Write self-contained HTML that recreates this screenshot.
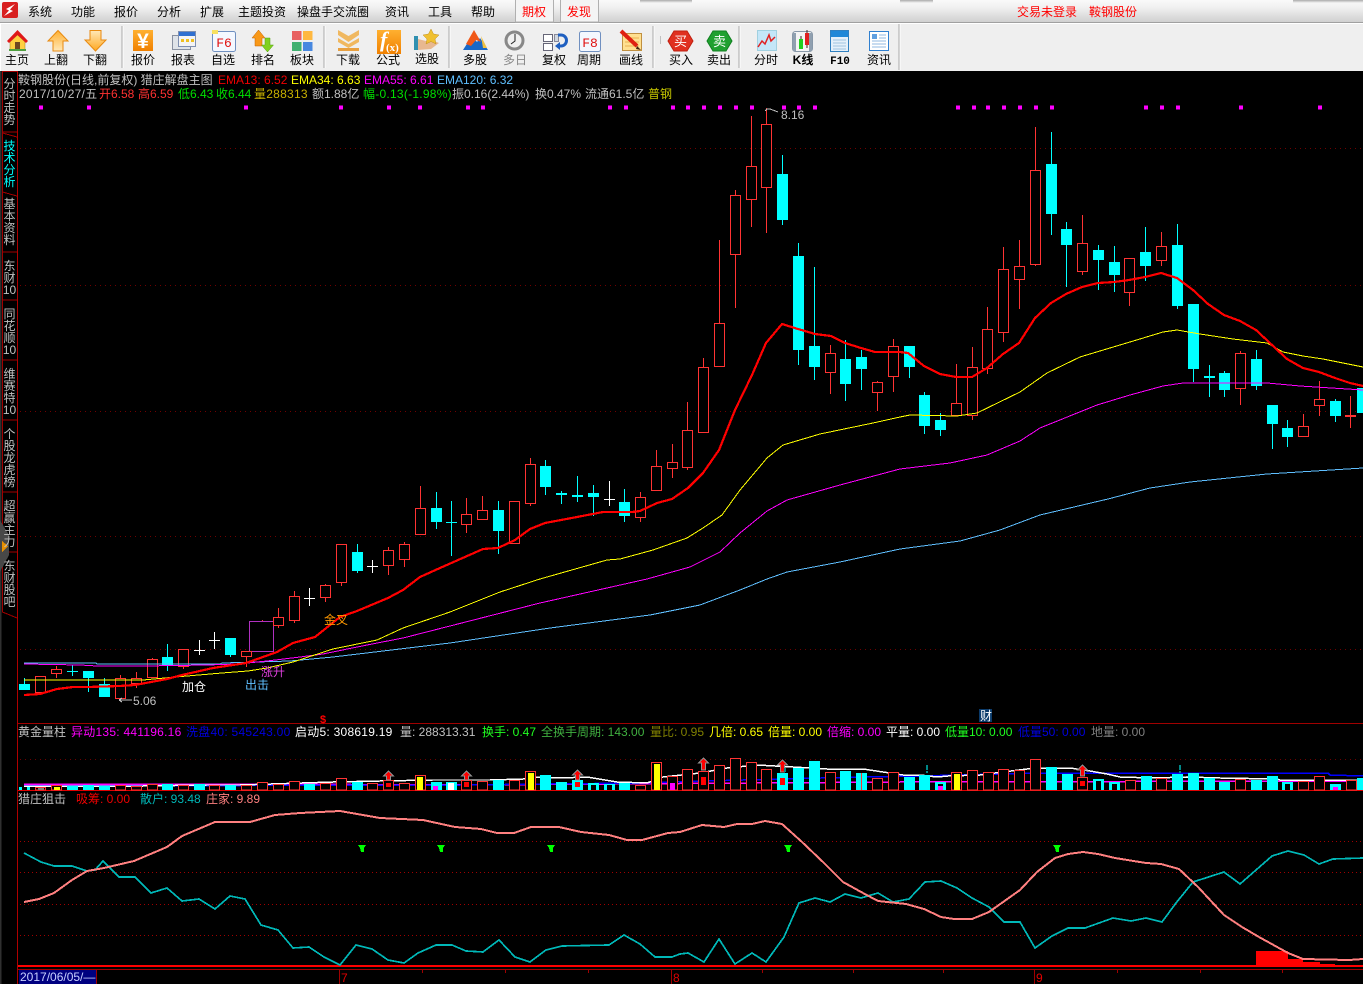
<!DOCTYPE html>
<html><head><meta charset="utf-8"><title>鞍钢股份</title>
<style>
html,body{margin:0;padding:0;background:#000;width:1363px;height:984px;overflow:hidden}
svg{position:absolute;left:0;top:0}
text{font-family:"Liberation Sans","WenQuanYi Zen Hei","Noto Sans CJK SC",sans-serif;font-size:12px;white-space:pre}
.t{position:absolute;left:2px;width:15px;text-align:center;font:12px/12px "Liberation Sans","WenQuanYi Zen Hei","Noto Sans CJK SC",sans-serif;color:#c0c0c0}
.m text{fill:#000}
.l text{fill:#000;text-anchor:middle}
.g{fill:#c0c0c0}
.w{letter-spacing:.25px}
</style></head><body>
<svg width="1363" height="984" viewBox="0 0 1363 984">
<defs>
<linearGradient id="mb" x1="0" y1="0" x2="0" y2="1"><stop offset="0" stop-color="#fafafa"/><stop offset=".35" stop-color="#f0f0f0"/><stop offset="1" stop-color="#d0d0d0"/></linearGradient>
<linearGradient id="or" x1="0" y1="0" x2="0" y2="1"><stop offset="0" stop-color="#ffb030"/><stop offset="1" stop-color="#ffe8b8"/></linearGradient>
<linearGradient id="or2" x1="0" y1="0" x2="0" y2="1"><stop offset="0" stop-color="#ffe8b8"/><stop offset="1" stop-color="#ffa820"/></linearGradient>
<linearGradient id="or3" x1="0" y1="0" x2="0" y2="1"><stop offset="0" stop-color="#ffb030"/><stop offset="1" stop-color="#f08000"/></linearGradient>
<linearGradient id="sh" x1="0" y1="0" x2="0" y2="1"><stop offset="0" stop-color="#aaa"/><stop offset="1" stop-color="#aaa" stop-opacity="0"/></linearGradient>
</defs>
<!-- menu bar -->
<rect width="1363" height="22" fill="url(#mb)"/>
<rect x="640" width="52" height="3" fill="url(#sh)"/><rect x="900" width="33" height="3" fill="url(#sh)"/><rect x="1293" width="70" height="3" fill="url(#sh)"/>
<rect y="22" width="1363" height="1" fill="#a0a0a0"/>
<rect y="23" width="1363" height="1" fill="#fff"/>
<rect x="1" y="24" width="1362" height="47" fill="#efefef"/>
<rect y="23" width="1" height="48" fill="#fff"/>
<rect x="515.5" y="-1" width="38" height="23" fill="#f4f4f4" stroke="#b0b0b0"/>
<rect x="560.5" y="-1" width="38" height="23" fill="#f4f4f4" stroke="#b0b0b0"/>
<rect x="2" y="2" width="16" height="16" rx="2" fill="#d82020"/>
<path d="M15 4L6 9l3 1.500L4 16l9-5-3-1.500z" fill="#fff"/>
<g class="m">
<text x="28" y="16">系统</text><text x="71" y="16">功能</text><text x="114" y="16">报价</text><text x="157" y="16">分析</text><text x="200" y="16">扩展</text><text x="238" y="16">主题投资</text><text x="297" y="16">操盘手交流圈</text><text x="385" y="16">资讯</text><text x="428" y="16">工具</text><text x="471" y="16">帮助</text>
</g>
<text x="522" y="16" fill="#f00">期权</text><text x="567" y="16" fill="#f00">发现</text>
<text x="1017" y="16" fill="#f00">交易未登录</text><text x="1089" y="16" fill="#f00">鞍钢股份</text>
<!-- toolbar separators -->
<path d="M122 26v42M324 26v42M449 26v42M653 26v42M739 26v42M899 24v46" stroke="#a8a8a8" fill="none"/>
<path d="M123 26v42M325 26v42M450 26v42M654 26v42M740 26v42M900 24v46" stroke="#fff" fill="none"/>
<path d="M660.500 36v8" stroke="#c0c0c0"/>
<!-- icons -->
<path d="M10 42l7.500-7 7.500 7v8H10z" fill="#ffd040" stroke="#a08020" stroke-width=".5"/><rect x="15" y="42" width="5" height="8" fill="#704820"/><path d="M17.500 30L7 41l2 2 8.500-8 8.500 8 2-2z" fill="#e01818"/><rect x="9" y="49" width="17" height="2" fill="#50a040"/>
<path d="M58 30.500L68 41H63V51H53V41H48Z" fill="url(#or)" stroke="#e88a10"/>
<path d="M90 30.500H101V40H106L95.500 51 85 40H90Z" fill="url(#or2)" stroke="#e88a10"/>
<rect x="133" y="30" width="20" height="21" fill="url(#or3)"/><text x="143" y="48" text-anchor="middle" fill="#fff" style="font-size:21px;font-weight:bold">¥</text>
<rect x="172.500" y="35.500" width="18" height="14" fill="#dfe3e8" stroke="#8890a0"/><rect x="178.500" y="31.500" width="17" height="15" fill="#f4f4f4" stroke="#8090b0"/><rect x="179" y="32" width="16" height="4" fill="#3070d0"/><path d="M181 39h3v3h-3zM186 39h3v3h-3zM191 39h3v3h-3z" fill="#f0c020"/>
<rect x="212.500" y="31.500" width="23" height="20" rx="2" fill="#f4f8ff" stroke="#7090c0"/><path d="M212 30h6v4h-6z" fill="#f8e060"/><text x="224" y="47" text-anchor="middle" fill="#e01010" style="font-family:'Liberation Mono',monospace;font-size:13px">F6</text>
<path d="M258.500 30l6.500 8h-3v8h-7v-8h-3z" fill="#f89818" stroke="#c06000" stroke-width=".5"/><path d="M265 38h5v7h3.500l-6 7-6-7h3.500z" fill="#80d020" stroke="#50a010" stroke-width=".5"/>
<rect x="292" y="31" width="9.500" height="9" fill="#e86060"/><rect x="303" y="31" width="9.500" height="9" fill="#ffb840"/><rect x="292" y="42" width="9.500" height="9" fill="#40b070"/><rect x="303" y="42" width="9.500" height="9" fill="#4888e0"/>
<path d="M338 30l10.500 6 10.500-6v5l-10.500 7-10.500-7zM338 38l10.500 6 10.500-6v4l-10.500 6-10.500-6z" fill="#f0b860"/><rect x="338" y="48" width="21" height="3" fill="#e8a040"/>
<rect x="377" y="30" width="24" height="24" fill="url(#or3)"/><text x="380" y="47" fill="#fff" style="font-family:'Liberation Serif',serif;font-style:italic;font-size:22px;font-weight:bold">f</text><text x="386" y="51" fill="#fff" style="font-family:'Liberation Serif',serif;font-size:11px;font-weight:bold">(x)</text>
<rect x="414" y="36" width="4" height="14" fill="#3090b0"/><path d="M418 39l8 2h8l5 2-8 6-13 1z" fill="#e8b890"/><path d="M431 29l2.500 5 5.500 1-4 4 1 5-5-2.500-5 2.500 1-5-4-4 5.500-1z" fill="#f0c030" stroke="#c09020" stroke-width=".5"/>
<path d="M463 50L472 36L477 42L480 38L488 50Z" fill="#1868c8"/><path d="M466 44L474 30L481 42L476 40L471 46Z" fill="#f05818"/><path d="M481 36l6 12h-4z" fill="#f0c040"/>
<circle cx="514.500" cy="40.500" r="8.500" fill="#f0f0f0" stroke="#888" stroke-width="3"/><path d="M515 34v7l-4 3" stroke="#222" fill="none"/>
<rect x="543.500" y="34.500" width="9" height="7" fill="#fff" stroke="#667"/><rect x="543.500" y="43.500" width="9" height="7" fill="#fff" stroke="#667"/><rect x="554.500" y="34.500" width="4" height="7" fill="#d0d8e0" stroke="#889"/><path d="M558 35h3a5 5 0 0 1 0 11h-2" stroke="#2060c0" stroke-width="3" fill="none"/><path d="M560 42v8l-5-4z" fill="#2060c0"/>
<rect x="579.500" y="31.500" width="21" height="20" rx="2" fill="#f4f8ff" stroke="#7090c0"/><text x="590" y="47" text-anchor="middle" fill="#e01010" style="font-family:'Liberation Mono',monospace;font-size:13px">F8</text>
<rect x="622.500" y="33.500" width="19" height="17" fill="#ffe090" stroke="#c09040"/><path d="M625 38h14M625 42h14M625 46h14" stroke="#e8b050"/><path d="M621 31l16 15" stroke="#e02010" stroke-width="4"/><path d="M637 46l4 4-5-1z" fill="#402010"/>
<path d="M674 31h13l6 10-6 10h-13l-6-10z" fill="#e03020" stroke="#c02010"/><text x="680.500" y="46" text-anchor="middle" fill="#fff" style="font-size:13px">买</text>
<path d="M713 31h13l6 10-6 10h-13l-6-10z" fill="#20a030" stroke="#108020"/><text x="719.500" y="46" text-anchor="middle" fill="#fff" style="font-size:13px">卖</text>
<rect x="757.500" y="30.500" width="19" height="20" fill="#c4e6f8" stroke="#a0d0e0"/><path d="M758 47l4-6 3 3 4-9 2 6 4-4" stroke="#e02020" fill="none" stroke-width="1.500"/>
<rect x="792.500" y="31.500" width="20" height="20" rx="3" fill="#f4f4f4" stroke="#8898a8"/><path d="M793 33h3v18h-3zM809 33h3v18h-3z" fill="#90a0b0"/><rect x="799" y="39" width="4" height="10" fill="#20d020"/><rect x="805" y="33" width="4" height="12" fill="#e02020"/><path d="M801 36v3M807 30v3M807 45v3" stroke="#402020"/>
<rect x="830.500" y="30.500" width="18" height="21" fill="#e4f0fa" stroke="#3080c0"/><rect x="831" y="31" width="17" height="6" fill="#2088d8"/><path d="M833 40h13M833 43h13M833 46h13M833 49h13" stroke="#a0c4e0"/>
<rect x="869.500" y="31.500" width="19" height="19" fill="#fff" stroke="#3080d0"/><rect x="872" y="34" width="5" height="5" fill="#60a0e0"/><path d="M879 35h7M879 38h7M872 41h14M872 44h14M872 47h14" stroke="#90b8e0"/>
<!-- toolbar labels -->
<g class="l">
<text x="17" y="64">主页</text><text x="56" y="64">上翻</text><text x="95" y="64">下翻</text><text x="143" y="64">报价</text><text x="183" y="64">报表</text><text x="223" y="64">自选</text><text x="263" y="64">排名</text><text x="302" y="64">板块</text><text x="348" y="64">下载</text><text x="388" y="64">公式</text><text x="427" y="63">选股</text><text x="475" y="64">多股</text><text x="554" y="64">复权</text><text x="589" y="64">周期</text><text x="631" y="64">画线</text><text x="681" y="64">买入</text><text x="719" y="64">卖出</text><text x="766" y="64">分时</text><text x="879" y="64">资讯</text>
<text x="515" y="64" style="fill:#888">多日</text>
<text x="803" y="64" style="font-weight:bold">K线</text>
<text x="840" y="64" style="font-family:'Liberation Mono',monospace;font-size:11px;font-weight:bold">F10</text>
</g>
<!-- black body -->
<rect y="71" width="1363" height="913" fill="#000"/>
<rect y="71" width="1.500" height="913" fill="#303030"/>
<g shape-rendering="crispEdges">
<!-- sidebar lines -->
<path d="M2.500 71.500H17M2.500 71V612L17 618M2.500 132L17 132M2.500 133L17 137M2.500 192L17 196M2.500 252H17M2.500 300H17M2.500 360H17M2.500 420H17M2.500 492H17M2.500 552H17" stroke="#a00000" fill="none"/>
<path d="M17.500 71V984" stroke="#b00000"/>
<!-- grid -->
<path d="M20 148.500H1363M20 285.500H1363M20 411.500H1363M20 536.500H1363M20 649.500H1363" stroke="#700000" stroke-dasharray="1 4" fill="none"/>
<path d="M20 759.500H1363" stroke="#700000" stroke-dasharray="1 4"/>
<path d="M20 841.500H1363M20 872.500H1363M20 904.500H1363M20 935.500H1363" stroke="#a00000" stroke-dasharray="1 3" fill="none"/>
<!-- panel dividers -->
<path d="M18 723.500H1363" stroke="#a00000"/>
<path d="M18 790.500H1363" stroke="#e00000"/>
<path d="M18 966H1363" stroke="#f00" stroke-width="2"/>
<path d="M18 969.500H1363" stroke="#a00000"/>
<!-- markers -->
<path d="M41 107.500h.1M89 107.500h.1M246 107.500h.1M341 107.500h.1M389 107.500h.1M420 107.500h.1M468 107.500h.1M483 107.500h.1M610 107.500h.1M626 107.500h.1M673 107.500h.1M688 107.500h.1M704 107.500h.1M720 107.500h.1M736 107.500h.1M752 107.500h.1M784 107.500h.1M799 107.500h.1M815 107.500h.1M958 107.500h.1M974 107.500h.1M988 107.500h.1M1004 107.500h.1M1020 107.500h.1M1036 107.500h.1M1052 107.500h.1M1146 107.500h.1M1162 107.500h.1M1178 107.500h.1M1241 107.500h.1M1320 107.500h.1" stroke="#f0f" stroke-width="4" stroke-linecap="square" fill="none"/>
<!-- magenta box -->
<rect x="249.500" y="621.500" width="24" height="30" fill="#000" stroke="#b030c0"/>
<path d="M262.500 620v1" stroke="#f33"/>
<!-- cyan wicks -->
<path d="M24.500 678V684M72.500 665V676M88.500 678V692M104.500 678V684M167.500 644V657M167.500 665V671M230.500 655V657M357.500 544V552M357.500 571V573M436.500 492V508M436.500 522V529M451.500 501V556M498.500 501V510M498.500 531V554M545.500 460V466M545.500 487V495M561.500 491V504M577.500 476V502M593.500 485V516M624.500 489V502M624.500 516V522M782.500 155V174M782.500 220V225M798.500 243V256M798.500 350V365M814.500 267V346M814.500 367V380M845.500 340V359M845.500 384V401M861.500 350V357M861.500 369V390M909.500 367V378M924.500 392V395M924.500 426V434M940.500 413V420M940.500 430V436M1051.500 132V164M1051.500 214V235M1066.500 222V229M1066.500 245V287M1098.500 245V250M1098.500 260V290M1114.500 246V262M1114.500 275V292M1145.500 227V252M1145.500 266V281M1177.500 224V245M1177.500 306V309M1193.500 369V382M1209.500 365V397M1224.500 371V373M1224.500 390V397M1256.500 350V359M1256.500 386V390M1272.500 424V449M1287.500 420V428M1287.500 437V447M1335.500 399V401M1335.500 416V422" stroke="#0ff" fill="none"/>
<!-- cyan bodies -->
<path d="M19 684h11V690h-11zM67 671h11v1h-11zM83 671h11V678h-11zM99 684h11V697h-11zM162 657h11V665h-11zM225 638h11V655h-11zM352 552h11V571h-11zM431 508h11V522h-11zM446 522h11v1h-11zM493 510h11V531h-11zM540 466h11V487h-11zM556 493h11V495h-11zM572 495h11V497h-11zM588 493h11V497h-11zM619 502h11V516h-11zM777 174h11V220h-11zM793 256h11V350h-11zM809 346h11V367h-11zM840 359h11V384h-11zM856 357h11V369h-11zM904 346h11V367h-11zM919 395h11V426h-11zM935 420h11V430h-11zM1046 164h11V214h-11zM1061 229h11V245h-11zM1093 250h11V260h-11zM1109 262h11V275h-11zM1140 252h11V266h-11zM1172 245h11V306h-11zM1188 304h11V369h-11zM1204 376h11V378h-11zM1219 373h11V390h-11zM1251 359h11V386h-11zM1267 405h11V424h-11zM1282 428h11V437h-11zM1330 401h11V416h-11zM1357 388h6V413h-6z" fill="#0ff"/>
<!-- white crosses -->
<path d="M199.500 640V655M194 650.500h11M214.500 632V649M209 640.500h11M309.500 588V606M304 598.500h11M372.500 560V573M367 566.500h11M609.500 481V506M604 499.500h11" stroke="#fff" fill="none"/>
<!-- red candles -->
<path d="M35.500 676.500h10V692.500h-10zM56.500 666V669M56.500 673V678M51.500 669.500h10V673.500h-10zM120.500 675V678M115.500 678.500h10V698.500h-10zM136.500 672V678M136.500 683V688M131.500 678.500h10V683.500h-10zM152.500 658V659M147.500 659.500h10V677.500h-10zM183.500 666V669M178.500 649.500h10V666.500h-10zM246.500 656V667M241.500 651.500h10V656.500h-10zM278.500 608V617M278.500 625V628M273.500 617.500h10V625.500h-10zM294.500 591V596M294.500 620V623M289.500 596.500h10V620.500h-10zM325.500 584V585M325.500 597V602M320.500 585.500h10V597.500h-10zM341.500 582V586M336.500 544.500h10V582.500h-10zM388.500 547V550M388.500 565V575M383.500 550.500h10V565.500h-10zM404.500 542V544M404.500 559V567M399.500 544.500h10V559.500h-10zM420.500 486V508M420.500 534V535M415.500 508.500h10V534.500h-10zM466.500 498V514M466.500 524V533M461.500 514.500h10V524.500h-10zM482.500 496V510M482.500 519V520M477.500 510.500h10V519.500h-10zM509.500 501.500h10V543.500h-10zM530.500 458V464M530.500 503V506M525.500 464.500h10V503.500h-10zM640.500 492V497M640.500 517V522M635.500 497.500h10V517.500h-10zM656.500 450V466M656.500 490V491M651.500 466.500h10V490.500h-10zM672.500 444V462M672.500 468V478M667.500 462.500h10V468.500h-10zM687.500 402V430M687.500 467V470M682.500 430.500h10V467.500h-10zM703.500 358V367M698.500 367.500h10V432.500h-10zM719.500 240V323M714.500 323.500h10V366.500h-10zM735.500 190V195M735.500 254V308M730.500 195.500h10V254.500h-10zM751.500 116V166M751.500 199V227M746.500 166.500h10V199.500h-10zM766.500 108V124M766.500 187V233M761.500 124.500h10V187.500h-10zM830.500 345V353M830.500 372V394M825.500 353.500h10V372.500h-10zM877.500 381V382M877.500 392V411M872.500 382.500h10V392.500h-10zM893.500 339V346M893.500 376V392M888.500 346.500h10V376.500h-10zM956.500 364V403M951.500 403.500h10V415.500h-10zM972.500 347V367M972.500 415V420M967.500 367.500h10V415.500h-10zM987.500 307V329M987.500 368V374M982.500 329.500h10V368.500h-10zM1003.500 247V269M1003.500 332V342M998.500 269.500h10V332.500h-10zM1019.500 240V266M1019.500 279V309M1014.500 266.500h10V279.500h-10zM1035.500 127V170M1035.500 264V266M1030.500 170.500h10V264.500h-10zM1082.500 215V243M1082.500 271V275M1077.500 243.500h10V271.500h-10zM1129.500 292V306M1124.500 258.500h10V292.500h-10zM1161.500 232V246M1161.500 260V266M1156.500 246.500h10V260.500h-10zM1240.500 351V353M1240.500 388V405M1235.500 353.500h10V388.500h-10zM1303.500 414V426M1298.500 426.500h10V436.500h-10zM1319.500 381V399M1319.500 405V416M1314.500 399.500h10V405.500h-10zM1350.500 396V428" stroke="#ff3333" fill="#000"/>
<rect x="1345" y="415" width="11" height="2" fill="#ff3333"/>
<!-- EMA lines -->
<polyline fill="none" stroke="#5fbfff" stroke-width="1" points="24,663 96,663 97,664 220,664 222,663 290,661 333,657 450,643 550,628 650,615 700,605 740,590 767,579 787,572 840,562 900,549 960,541 1000,530 1040,515 1108,499 1150,488 1190,482 1267,474 1363,468"/>
<polyline fill="none" stroke="#f0f" stroke-width="1" points="24,664 80,665 97,666 143,666 207,665 238,664 267,661 300,657 323,654 367,645 403,638 450,626 540,603 647,579 690,567 720,552 740,533 767,511 787,500 840,485 900,469 950,463 987,455 1020,441 1040,428 1097,405 1130,395 1163,386 1183,383 1233,383 1267,383 1300,386 1363,390"/>
<polyline fill="none" stroke="#ff0" stroke-width="1" points="24,680 48,680 96,680 143,680 187,676 222,673 248,671 267,668 293,662 333,649 377,640 403,628 450,612 500,592 540,579 607,560 620,559 653,550 687,538 703,528 722,515 740,490 767,458 783,445 820,434 873,423 900,417 910,415 957,416 977,413 1020,392 1047,373 1080,357 1130,342 1163,332 1177,330 1200,334 1233,339 1267,343 1283,352 1303,356 1323,359 1363,367"/>
<polyline fill="none" stroke="#f00" stroke-width="2.200" points="24,695 40,694 57,689 73,687 88,687 119,686 135,685 167,679 182,675 213,668 246,663 277,652 293,643 315,637 340,617 357,611 388,598 403,590 420,577 440,568 483,549 498,548 515,540 530,529 545,523 577,517 603,512 632,512 640,511 657,503 672,499 688,488 703,473 719,450 735,410 752,375 766,343 782,324 798,329 815,334 831,336 845,343 861,348 875,352 900,352 908,353 924,366 940,374 956,377 972,377 987,368 1003,354 1019,343 1035,318 1051,303 1066,294 1082,287 1098,283 1114,282 1129,280 1145,277 1161,273 1177,278 1193,290 1208,304 1224,315 1240,321 1256,330 1272,345 1287,359 1303,368 1319,372 1335,378 1350,383 1363,386"/>
<!-- high/low arrows -->
<path d="M767 109l-2 2M767 109h3l8 3M119 700h13M119 700l3-2M119 700l3 2" stroke="#c0c0c0" fill="none"/>
<!-- volume lines -->
<polyline fill="none" stroke="#f0f" stroke-width="1.500" points="24,784 240,784 460,785 900,782 1363,781"/>
<polyline fill="none" stroke="#00f" stroke-width="1.500" points="24,786 460,785 640,783 743,780 860,777 920,776 1040,773 1328,773 1330,775 1363,776"/>
<polyline fill="none" stroke="#fff" stroke-width="1.500" points="24,786 143,786 207,785 240,785 333,782 380,781 433,780 490,780 523,779 537,777 560,778 587,777 617,782 647,783 663,777 700,773 727,768 757,765 775,766 793,767 827,769 863,769 903,775 920,775 937,777 948,776 980,775 995,773 1027,769 1042,768 1070,768 1090,771 1107,774 1120,777 1153,778 1187,777 1220,778 1277,779 1280,780 1363,780"/>
<!-- volume cyan -->
<path d="M19 787h3V790h-3zM27 787h3V790h-3zM67 786h11V790h-11zM83 785h11V790h-11zM99 786h11V790h-11zM162 784h11V790h-11zM194 784h11V790h-11zM225 785h11V790h-11zM304 784h11V790h-11zM352 782h11V790h-11zM431 782h11V790h-11zM446 782h11V790h-11zM493 780h11V790h-11zM540 775h11V790h-11zM556 782h11V790h-11zM572 780h11V790h-11zM588 783h11V790h-11zM604 784h11V790h-11zM619 783h11V790h-11zM777 773h11V790h-11zM793 768h11V790h-11zM809 761h11V790h-11zM840 771h11V790h-11zM856 773h11V790h-11zM904 777h11V790h-11zM919 775h11V790h-11zM935 782h11V790h-11zM1046 767h11V790h-11zM1062 774h11V790h-11zM1093 779h11V790h-11zM1109 782h11V790h-11zM1141 776h11V790h-11zM1172 774h11V790h-11zM1188 773h11V790h-11zM1204 778h11V790h-11zM1219 782h11V790h-11zM1251 780h11V790h-11zM1267 776h11V790h-11zM1282 782h11V790h-11zM1330 784h11V790h-11zM1357 778h6V790h-6z" fill="#0ff"/>
<!-- volume red -->
<path d="M35.500 787.500h10V790h-10zM51.500 785.500h10V790h-10zM115.500 785.500h10V790h-10zM131.500 786.500h10V790h-10zM147.500 784.500h10V790h-10zM178.500 785.500h10V790h-10zM209.500 785.500h10V790h-10zM241.500 785.500h10V790h-10zM257.500 782.500h10V790h-10zM273.500 784.500h10V790h-10zM289.500 781.500h10V790h-10zM320.500 783.500h10V790h-10zM336.500 778.500h10V790h-10zM367.500 783.500h10V790h-10zM383.500 780.500h10V790h-10zM399.500 783.500h10V790h-10zM415.500 775.500h10V790h-10zM461.500 780.500h10V790h-10zM477.500 781.500h10V790h-10zM509.500 780.500h10V790h-10zM525.500 771.500h10V790h-10zM635.500 785.500h10V790h-10zM651.500 762.500h10V790h-10zM667.500 776.500h10V790h-10zM682.500 769.500h10V790h-10zM698.500 771.500h10V790h-10zM714.500 765.500h10V790h-10zM730.500 758.500h10V790h-10zM746.500 762.500h10V790h-10zM761.500 769.500h10V790h-10zM825.500 772.500h10V790h-10zM872.500 778.500h10V790h-10zM888.500 772.500h10V790h-10zM951.500 772.500h10V790h-10zM967.500 770.500h10V790h-10zM983.500 772.500h10V790h-10zM998.500 769.500h10V790h-10zM1014.500 770.500h10V790h-10zM1030.500 759.500h10V790h-10zM1077.500 777.500h10V790h-10zM1125.500 780.500h10V790h-10zM1156.500 778.500h10V790h-10zM1235.500 779.500h10V790h-10zM1298.500 781.500h10V790h-10zM1314.500 776.500h10V790h-10zM1346.500 780.500h10V790h-10z" stroke="#ff3333" fill="#000"/>
<path d="M861.500 773V790" stroke="#ff3333"/>
<!-- volume inners -->
<rect x="38" y="788" width="6" height="2" fill="#808080"/>
<path d="M54 787h6v3h-6zM417 777h6v13h-6zM528 773h6v17h-6zM654 764h6v26h-6zM954 774h6v16h-6z" fill="#ff0"/>
<rect x="448" y="783" width="6" height="7" fill="#fff"/>
<path d="M433 786h5v4h-5zM670 783h5v7h-5zM938 786h5v4h-5zM1333 787h5v3h-5z" fill="#f0f"/>
<path d="M386 783h5v4h-5zM464 782h5v5h-5zM575 782h5v5h-5zM701 777h5v8h-5zM780 778h5v7h-5zM1080 781h5v5h-5z" fill="#f00"/>
<path d="M591 785h5v5h-5zM607 785h5v5h-5zM938 784h5v2h-5zM1096 781h5v9h-5zM1112 784h5v6h-5zM1285 784h5v6h-5z" fill="#000"/>
<path d="M388.500 771l5 5h-3v4h-4v-4h-3zM466.500 771l5 5h-3v4h-4v-4h-3zM577.500 770l5 5h-3v5h-4v-5h-3zM703.500 758l5 5h-3v7h-4v-7h-3zM782.500 760l5 5h-3v7h-4v-7h-3zM1082.500 765l5 5h-3v6h-4v-6h-3z" fill="#f00" stroke="#909090" stroke-width="1"/>
<path d="M927 765v5M927 771v2M1180 765v5M1180 771v2M785 768v4" stroke="#008888" stroke-width="2" fill="none"/>
<!-- dollar & cai -->
<rect x="979" y="709" width="13" height="13" fill="#0a3a6a"/>
<!-- bottom panel -->
<path d="M1256 951h32v15h-32zM1288 959h15v7h-15zM1303 962h17v4h-17zM1320 964h15v2h-15zM1335 965h28v1h-28z" fill="#f00"/>
<polyline fill="none" stroke="#00b8b8" stroke-width="1.700" points="24,853 41,862 54,866 72,866 87,871 95,870 103,861 119,877 135,877 151,893 167,888 182,901 199,899 215,909 230,896 245,899 261,925 278,930 293,948 309,947 324,957 340,965 356,945 372,949 388,960 404,963 418,953 436,945 452,945 466,951 483,952 499,940 515,957 530,962 546,950 562,946 609,945 624,935 640,944 655,957 672,957 680,954 688,953 704,962 719,939 735,964 752,953 766,962 784,937 799,903 815,898 830,902 845,894 861,898 878,893 893,902 909,899 925,882 941,881 957,888 972,898 989,907 1004,922 1020,922 1035,948 1052,936 1068,928 1085,928 1113,918 1131,921 1146,918 1162,922 1176,903 1193,882 1224,872 1240,884 1272,856 1288,851 1304,855 1319,864 1333,859 1363,858"/>
<polyline fill="none" stroke="#ff8080" stroke-width="2" points="24,902 39,899 54,893 72,880 87,871 104,868 134,861 167,847 182,836 215,822 250,822 275,815 300,813 340,811 380,818 423,820 455,827 481,829 497,833 514,833 531,827 559,827 581,832 609,835 627,840 642,840 668,833 680,832 702,825 724,827 737,824 752,824 765,821 782,824 802,842 824,863 843,882 863,893 878,901 906,904 924,909 941,917 954,919 972,919 989,912 1020,890 1037,872 1055,858 1068,854 1083,852 1098,854 1115,858 1146,863 1161,864 1179,869 1198,887 1224,915 1242,927 1259,937 1288,953 1303,959 1349,960 1363,959"/>
<path d="M358 845h8l-2 3v4h-3l-1-4zM437 845h8l-2 3v4h-3l-1-4zM547 845h8l-2 3v4h-3l-1-4zM784 845h8l-2 3v4h-3l-1-4zM1053 845h8l-2 3v4h-3l-1-4z" fill="#0f0"/>
<!-- axis -->
<rect x="19" y="970" width="77" height="14" fill="#000080"/>
<path d="M96.500 969V984M339.500 969V984M671.500 969V984M1034.500 969V984M422.500 969V973M505.500 969V973M588.500 969V973M762.500 969V973M853.500 969V973M943.500 969V973M1117.500 969V973M1200.500 969V973M1282.500 969V973" stroke="#a00000" fill="none"/>
<!-- sidebar triangle -->
<path d="M0 520L9 535V555L0 572z" fill="#484848"/><path d="M2 541L8 546L2 552z" fill="#e89000"/>
</g>
<!-- header text -->
<text x="18" y="84" class="g">鞍钢股份(日线,前复权) 猎庄解盘主图</text>
<text x="218" y="84" fill="#f00000">EMA13: 6.52</text>
<text x="291" y="84" fill="#ff0">EMA34: 6.63</text>
<text x="364" y="84" fill="#f0f">EMA55: 6.61</text>
<text x="437" y="84" fill="#5fbfff">EMA120: 6.32</text>
<text x="19" y="98" class="g w">2017/10/27/五</text>
<text x="99" y="98" fill="#ff3232">开6.58</text>
<text x="138" y="98" fill="#ff3232">高6.59</text>
<text x="178" y="98" fill="#00e000">低6.43</text>
<text x="216" y="98" fill="#00e000">收6.44</text>
<text x="254" y="98" fill="#c8b000" class="w">量288313</text>
<text x="312" y="98" class="g">额1.88亿</text>
<text x="363" y="98" fill="#00e000" class="w">幅-0.13(-1.98%)</text>
<text x="452" y="98" class="g">振0.16(2.44%)</text>
<text x="535" y="98" class="g">换0.47%</text>
<text x="585" y="98" class="g">流通61.5亿</text>
<text x="648" y="98" fill="#c8c800">普钢</text>
<!-- chart labels -->
<text x="781" y="119" class="g">8.16</text>
<text x="133" y="705" class="g">5.06</text>
<text x="324" y="624" fill="#ff9900">金叉</text>
<text x="261" y="676" fill="#e040e0">涨升</text>
<text x="182" y="691" fill="#fff">加仓</text>
<text x="245" y="689" fill="#5fbfff">出击</text>
<text x="320" y="723" fill="#f00" style="font-size:11px;font-weight:bold">$</text>
<text x="980" y="720" fill="#fff">财</text>
<!-- panel 2 text -->
<text x="18" y="736" class="g">黄金量柱</text>
<text x="71" y="736" fill="#f0f" class="w">异动135: 441196.16</text>
<text x="186" y="736" fill="#0000e0" class="w">洗盘40: 545243.00</text>
<text x="295" y="736" fill="#fff" class="w">启动5: 308619.19</text>
<text x="400" y="736" class="g">量: 288313.31</text>
<text x="482" y="736" fill="#20ff20">换手: 0.47</text>
<text x="541" y="736" fill="#40b040">全换手周期: 143.00</text>
<text x="650" y="736" fill="#808000">量比: 0.95</text>
<text x="709" y="736" fill="#ff0">几倍: 0.65</text>
<text x="768" y="736" fill="#ff0">倍量: 0.00</text>
<text x="827" y="736" fill="#f0f">倍缩: 0.00</text>
<text x="886" y="736" fill="#fff">平量: 0.00</text>
<text x="945" y="736" fill="#20ff20">低量10: 0.00</text>
<text x="1018" y="736" fill="#0000e0">低量50: 0.00</text>
<text x="1091" y="736" fill="#808080">地量: 0.00</text>
<!-- panel 3 text -->
<text x="18" y="803" class="g">猎庄狙击</text>
<text x="76" y="803" fill="#f00000">吸筹: 0.00</text>
<text x="140" y="803" fill="#00b8b8">散户: 93.48</text>
<text x="206" y="803" fill="#ff8080">庄家: 9.89</text>
<!-- axis text -->
<text x="20" y="981" fill="#c8d0ff">2017/06/05/—</text>
<text x="341" y="982" fill="#e00000">7</text>
<text x="673" y="982" fill="#e00000">8</text>
<text x="1036" y="982" fill="#e00000">9</text>
</svg>
<div class="t" style="top:78px">分<br>时<br>走<br>势</div>
<div class="t" style="top:140px;color:#0ff">技<br>术<br>分<br>析</div>
<div class="t" style="top:198px">基<br>本<br>资<br>料</div>
<div class="t" style="top:260px">东<br>财<br>10</div>
<div class="t" style="top:308px">同<br>花<br>顺<br>10</div>
<div class="t" style="top:368px">维<br>赛<br>特<br>10</div>
<div class="t" style="top:428px">个<br>股<br>龙<br>虎<br>榜</div>
<div class="t" style="top:500px">超<br>赢<br>主<br>力</div>
<div class="t" style="top:560px">东<br>财<br>股<br>吧</div>
</body></html>
